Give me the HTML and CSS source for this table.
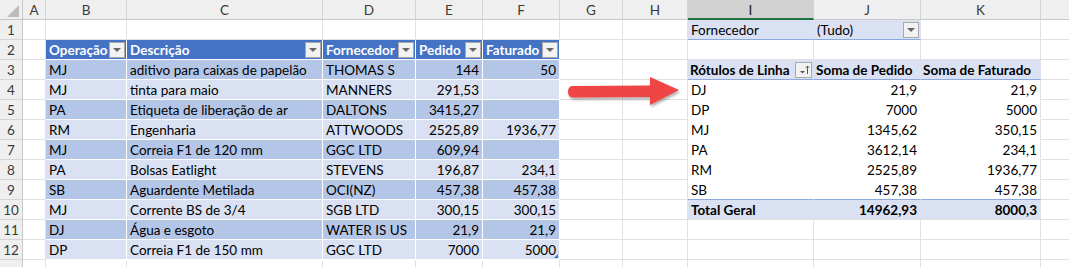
FILE: index.html
```html
<!DOCTYPE html>
<html lang="pt">
<head>
<meta charset="utf-8">
<title>Planilha</title>
<link rel="stylesheet" href="styles.css">
</head>
<body>
<div class="sheet">
  <!-- column headers -->
  <div class="c corner"><svg width="22" height="19" viewBox="0 0 22 19"><polygon points="19,5 19,17 7,17" fill="#bcbcbc"/></svg></div>
  <div class="c ch">A</div><div class="c ch">B</div><div class="c ch">C</div><div class="c ch">D</div><div class="c ch">E</div><div class="c ch">F</div><div class="c ch">G</div><div class="c ch">H</div><div class="c ch sel">I</div><div class="c ch">J</div><div class="c ch">K</div><div class="c ch"></div>

  <!-- row 1 -->
  <div class="c rh">1</div>
  <div class="c"></div><div class="c"></div><div class="c"></div><div class="c"></div><div class="c"></div><div class="c"></div><div class="c"></div><div class="c"></div>
  <div class="c pf">Fornecedor</div>
  <div class="c pf fx"><span>(Tudo)</span><span class="dd"></span></div>
  <div class="c"></div><div class="c"></div>

  <!-- row 2 -->
  <div class="c rh">2</div>
  <div class="c"></div>
  <div class="c th fx"><span>Operação</span><span class="dd"></span></div>
  <div class="c th fx"><span>Descrição</span><span class="dd"></span></div>
  <div class="c th fx"><span>Fornecedor</span><span class="dd"></span></div>
  <div class="c th fx"><span>Pedido</span><span class="dd"></span></div>
  <div class="c th fx"><span>Faturado</span><span class="dd"></span></div>
  <div class="c"></div><div class="c"></div>
  <div class="c"></div><div class="c"></div><div class="c"></div><div class="c"></div>

  <!-- row 3 -->
  <div class="c rh">3</div>
  <div class="c"></div>
  <div class="c d">MJ</div><div class="c d">aditivo para caixas de papelão</div><div class="c d">THOMAS S</div><div class="c d r">144</div><div class="c d r">50</div>
  <div class="c"></div><div class="c"></div>
  <div class="c ph fx"><span>Rótulos de Linha</span><span class="sb"><svg width="14" height="14" viewBox="0 0 14 14"><polygon points="3,8 8,8 5.5,10.5" fill="#555"/><line x1="10.5" y1="3" x2="10.5" y2="11" stroke="#555" stroke-width="1"/><polyline points="8.8,4.8 10.5,3 12.2,4.8" fill="none" stroke="#555" stroke-width="1"/></svg></span></div>
  <div class="c ph">Soma de Pedido</div>
  <div class="c ph">Soma de Faturado</div>
  <div class="c"></div>

  <!-- row 4 -->
  <div class="c rh">4</div>
  <div class="c"></div>
  <div class="c l">MJ</div><div class="c l">tinta para maio</div><div class="c l">MANNERS</div><div class="c l r">291,53</div><div class="c l r"></div>
  <div class="c"></div><div class="c"></div>
  <div class="c pb">DJ</div><div class="c pb r">21,9</div><div class="c pb pk r">21,9</div>
  <div class="c"></div>

  <!-- row 5 -->
  <div class="c rh">5</div>
  <div class="c"></div>
  <div class="c d">PA</div><div class="c d">Etiqueta de liberação de ar</div><div class="c d">DALTONS</div><div class="c d r">3415,27</div><div class="c d r"></div>
  <div class="c"></div><div class="c"></div>
  <div class="c pb">DP</div><div class="c pb r">7000</div><div class="c pb pk r">5000</div>
  <div class="c"></div>

  <!-- row 6 -->
  <div class="c rh">6</div>
  <div class="c"></div>
  <div class="c l">RM</div><div class="c l">Engenharia</div><div class="c l">ATTWOODS</div><div class="c l r">2525,89</div><div class="c l r">1936,77</div>
  <div class="c"></div><div class="c"></div>
  <div class="c pb">MJ</div><div class="c pb r">1345,62</div><div class="c pb pk r">350,15</div>
  <div class="c"></div>

  <!-- row 7 -->
  <div class="c rh">7</div>
  <div class="c"></div>
  <div class="c d">MJ</div><div class="c d">Correia F1 de 120 mm</div><div class="c d">GGC LTD</div><div class="c d r">609,94</div><div class="c d r"></div>
  <div class="c"></div><div class="c"></div>
  <div class="c pb">PA</div><div class="c pb r">3612,14</div><div class="c pb pk r">234,1</div>
  <div class="c"></div>

  <!-- row 8 -->
  <div class="c rh">8</div>
  <div class="c"></div>
  <div class="c l">PA</div><div class="c l">Bolsas Eatlight</div><div class="c l">STEVENS</div><div class="c l r">196,87</div><div class="c l r">234,1</div>
  <div class="c"></div><div class="c"></div>
  <div class="c pb">RM</div><div class="c pb r">2525,89</div><div class="c pb pk r">1936,77</div>
  <div class="c"></div>

  <!-- row 9 -->
  <div class="c rh">9</div>
  <div class="c"></div>
  <div class="c d">SB</div><div class="c d">Aguardente Metilada</div><div class="c d">OCI(NZ)</div><div class="c d r">457,38</div><div class="c d r">457,38</div>
  <div class="c"></div><div class="c"></div>
  <div class="c pb pl">SB</div><div class="c pb pl r">457,38</div><div class="c pb pk pl r">457,38</div>
  <div class="c"></div>

  <!-- row 10 -->
  <div class="c rh">10</div>
  <div class="c"></div>
  <div class="c l">MJ</div><div class="c l">Corrente BS de 3/4</div><div class="c l">SGB LTD</div><div class="c l r">300,15</div><div class="c l r">300,15</div>
  <div class="c"></div><div class="c"></div>
  <div class="c pt">Total Geral</div><div class="c pt r">14962,93</div><div class="c pt pk r">8000,3</div>
  <div class="c"></div>

  <!-- row 11 -->
  <div class="c rh">11</div>
  <div class="c"></div>
  <div class="c d">DJ</div><div class="c d">Água e esgoto</div><div class="c d">WATER IS US</div><div class="c d r">21,9</div><div class="c d r">21,9</div>
  <div class="c"></div><div class="c"></div>
  <div class="c"></div><div class="c"></div><div class="c"></div><div class="c"></div>

  <!-- row 12 -->
  <div class="c rh">12</div>
  <div class="c"></div>
  <div class="c l">DP</div><div class="c l">Correia F1 de 150 mm</div><div class="c l">GGC LTD</div><div class="c l r">7000</div><div class="c l r last">5000</div>
  <div class="c"></div><div class="c"></div>
  <div class="c"></div><div class="c"></div><div class="c"></div><div class="c"></div>

  <!-- row 13 (only its top edge is visible) -->
  <div class="c rh"></div>
  <div class="c"></div><div class="c"></div><div class="c"></div><div class="c"></div><div class="c"></div><div class="c"></div><div class="c"></div><div class="c"></div>
  <div class="c"></div><div class="c"></div><div class="c"></div><div class="c"></div>
</div>

<svg class="arrow" width="130" height="48" viewBox="0 0 130 48">
  <defs>
    <filter id="sh" x="-10%" y="-20%" width="130%" height="160%">
      <feDropShadow dx="1" dy="2" stdDeviation="1.6" flood-color="#000" flood-opacity="0.35"/>
    </filter>
  </defs>
  <path d="M13,16 L90,15.5 L90,7 L119,20 L90,35 L90,27 L13,27.5 Q8,27.5 8,21.8 Q8,16 13,16 Z" fill="#ef4444" filter="url(#sh)"/>
</svg>
</body>
</html>
```

FILE: styles.css
```css
html, body {
  margin: 0;
  padding: 0;
  background: #ffffff;
}

body {
  font-family: "Lato", "Open Sans", sans-serif;
  font-size: 13.5px;
  color: #000;
  overflow: hidden;
  position: relative;
  width: 1069px;
  height: 267px;
}

.sheet {
  display: grid;
  grid-template-columns: 23px 23px 81px 196px 93px 67px 77px 63px 65px 126px 107px 120px 40px;
  grid-auto-rows: 20px;
}

.c {
  box-sizing: border-box;
  border-right: 1px solid #e1e1e1;
  border-bottom: 1px solid #e1e1e1;
  padding: 0 3px;
  line-height: 20px;
  white-space: nowrap;
  overflow: hidden;
  position: relative;
}

.corner {
  background: #efefef;
  border-right: 1px solid #c8c8c8;
  border-bottom: 1px solid #c8c8c8;
  padding: 0;
}

.corner svg {
  display: block;
}

.ch {
  background: #efefef;
  border-right: 1px solid #d4d4d4;
  border-bottom: 1px solid #c8c8c8;
  text-align: center;
  color: #3a3a3a;
  padding: 0;
}

.ch.sel {
  background: #d2d2d2;
  border-bottom: 2px solid #217346;
  color: #222;
}

.rh {
  background: #efefef;
  border-right: 1px solid #c8c8c8;
  border-bottom: 1px solid #d4d4d4;
  text-align: center;
  color: #3a3a3a;
  padding: 0;
}

.r {
  text-align: right;
}

.fx {
  display: flex;
  align-items: center;
  justify-content: space-between;
  padding-right: 1px;
}

/* Excel table */
.th {
  background: #4472c4;
  color: #ffffff;
  font-weight: 700;
  border-right-color: #ffffff;
  border-bottom-color: #ffffff;
}

.d {
  background: #b4c6e7;
  border-right-color: #ffffff;
  border-bottom-color: #ffffff;
}

.l {
  background: #d9e1f2;
  border-right-color: #ffffff;
  border-bottom-color: #ffffff;
}

.last::after {
  content: "";
  position: absolute;
  right: 1px;
  bottom: 1px;
  width: 0;
  height: 0;
  border-left: 4px solid transparent;
  border-bottom: 4px solid #4472c4;
}

.dd {
  flex: none;
  box-sizing: border-box;
  width: 16px;
  height: 16px;
  background: #f2f2f2;
  border: 1px solid #a9a9a9;
  position: relative;
}

.dd::after {
  content: "";
  position: absolute;
  left: 3px;
  top: 5px;
  width: 0;
  height: 0;
  border-left: 4px solid transparent;
  border-right: 4px solid transparent;
  border-top: 4px solid #666;
}

/* Pivot table */
.pf {
  background: #d9e1f2;
  border-right-color: #d9e1f2;
  border-bottom: 1px solid #8ea9db;
}

.ph {
  background: #d9e1f2;
  font-weight: 700;
  border-right-color: #d9e1f2;
  border-bottom: 1px solid #8ea9db;
  padding-left: 2px;
}

.sb {
  flex: none;
  box-sizing: border-box;
  width: 17px;
  height: 16px;
  background: #f2f2f2;
  border: 1px solid #a9a9a9;
  display: flex;
  align-items: center;
  justify-content: center;
}

.sb svg {
  display: block;
}

.pb {
  background: #ffffff;
  border-right-color: #ffffff;
  border-bottom-color: #ffffff;
}

.pk {
  border-right-color: #e1e1e1;
}

.pl {
  border-bottom-color: #8ea9db;
}

.pt {
  background: #d9e1f2;
  font-weight: 700;
  border-right-color: #d9e1f2;
}

.pt.pk {
  border-right-color: #e1e1e1;
}

.arrow {
  position: absolute;
  left: 560px;
  top: 70px;
}
```
